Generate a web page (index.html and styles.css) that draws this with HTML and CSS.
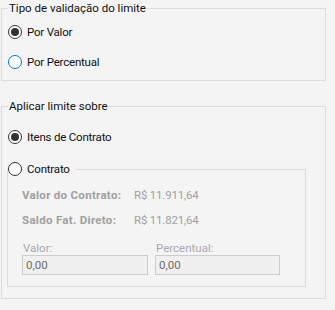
FILE: index.html
```html
<!DOCTYPE html>
<html lang="pt-BR">
<head>
  <meta charset="UTF-8">
  <title>Limite de Contrato</title>
  <link rel="stylesheet" href="styles.css">
</head>
<body>
  <div class="painel">
    <fieldset class="grupo grupo-tipo">
      <legend>Tipo de validação do limite</legend>
      <label class="opcao"><span class="radio marcado"></span>Por Valor</label>
      <label class="opcao opcao-segunda"><span class="radio foco"></span>Por Percentual</label>
    </fieldset>

    <fieldset class="grupo grupo-aplicar">
      <legend>Aplicar limite sobre</legend>
      <label class="opcao"><span class="radio marcado"></span>Itens de Contrato</label>

      <fieldset class="grupo grupo-contrato">
        <legend><label class="opcao"><span class="radio"></span>Contrato</label></legend>

        <div class="info">
          <span class="rotulo">Valor do Contrato:</span>
          <span class="valor">R$ 11.911,64</span>
        </div>
        <div class="info info-segunda">
          <span class="rotulo">Saldo Fat. Direto:</span>
          <span class="valor">R$ 11.821,64</span>
        </div>

        <div class="campos">
          <div class="campo">
            <label>Valor:</label>
            <input type="text" value="0,00" disabled>
          </div>
          <div class="campo campo-percentual">
            <label>Percentual:</label>
            <input type="text" value="0,00" disabled>
          </div>
        </div>
      </fieldset>
    </fieldset>
  </div>
</body>
</html>
```

FILE: styles.css
```css
body {
  margin: 0;
  background: #f4f4f4;
  font-family: Roboto, "Liberation Sans", Arial, sans-serif;
  font-size: 11.5px;
  color: #1a1a1a;
}
.painel {
  padding-left: 1px;
}
.grupo {
  box-sizing: border-box;
  margin: 0;
  border: 1px solid #dcdcdc;
  min-width: 0;
}
.grupo legend {
  line-height: 16px;
  height: 16px;
  padding: 0 1px;
  color: #111;
}
.grupo-tipo {
  width: 325px;
  padding: 0 6px 10px 6px;
}
.grupo-tipo .opcao {
  margin-top: 8px;
}
.grupo-tipo .opcao-segunda {
  margin-top: 14px;
}
.grupo-aplicar {
  width: 325px;
  margin-top: 17px;
  padding: 0 6px 11px 6px;
}
.grupo-aplicar > .opcao {
  margin-top: 15px;
}
.grupo-contrato {
  width: 299px;
  margin: 16px 0 0 -1px;
  padding: 0 0 11px 14px;
}
.grupo-contrato legend {
  padding: 0 6px 0 0;
  margin-left: -14px;
}

/* radios desenhados */
.opcao {
  display: flex;
  align-items: center;
  height: 16px;
  line-height: 16px;
  color: #111;
  letter-spacing: -0.2px;
}
.radio {
  box-sizing: border-box;
  width: 14px;
  height: 14px;
  border: 1px solid #333;
  border-radius: 50%;
  background: #fff;
  margin-right: 5px;
  display: flex;
  align-items: center;
  justify-content: center;
}
.radio.marcado::after {
  content: "";
  width: 8px;
  height: 8px;
  border-radius: 50%;
  background: #333;
}
.radio.foco {
  border-color: #0078d7;
}

.info {
  display: flex;
  height: 16px;
  line-height: 16px;
  margin-top: 10px;
  color: #a0a0a0;
}
.info-segunda {
  margin-top: 9px;
}
.rotulo {
  width: 112px;
  font-weight: bold;
  letter-spacing: 0.3px;
}
.valor {
  letter-spacing: -0.2px;
}

.campos {
  display: flex;
  gap: 7px;
  margin-top: 13px;
}
.campo label {
  display: block;
  line-height: 14px;
  color: #a8a8b0;
  padding-left: 1px;
}
.campo input {
  box-sizing: border-box;
  width: 126px;
  height: 20px;
  margin: 0;
  padding: 0 3px;
  border: 1px solid #cccccc;
  background: #f0f0f0;
  font-family: inherit;
  font-size: 11.5px;
  color: #6d6d6d;
}
.campo-percentual input {
  width: 125px;
}
```
